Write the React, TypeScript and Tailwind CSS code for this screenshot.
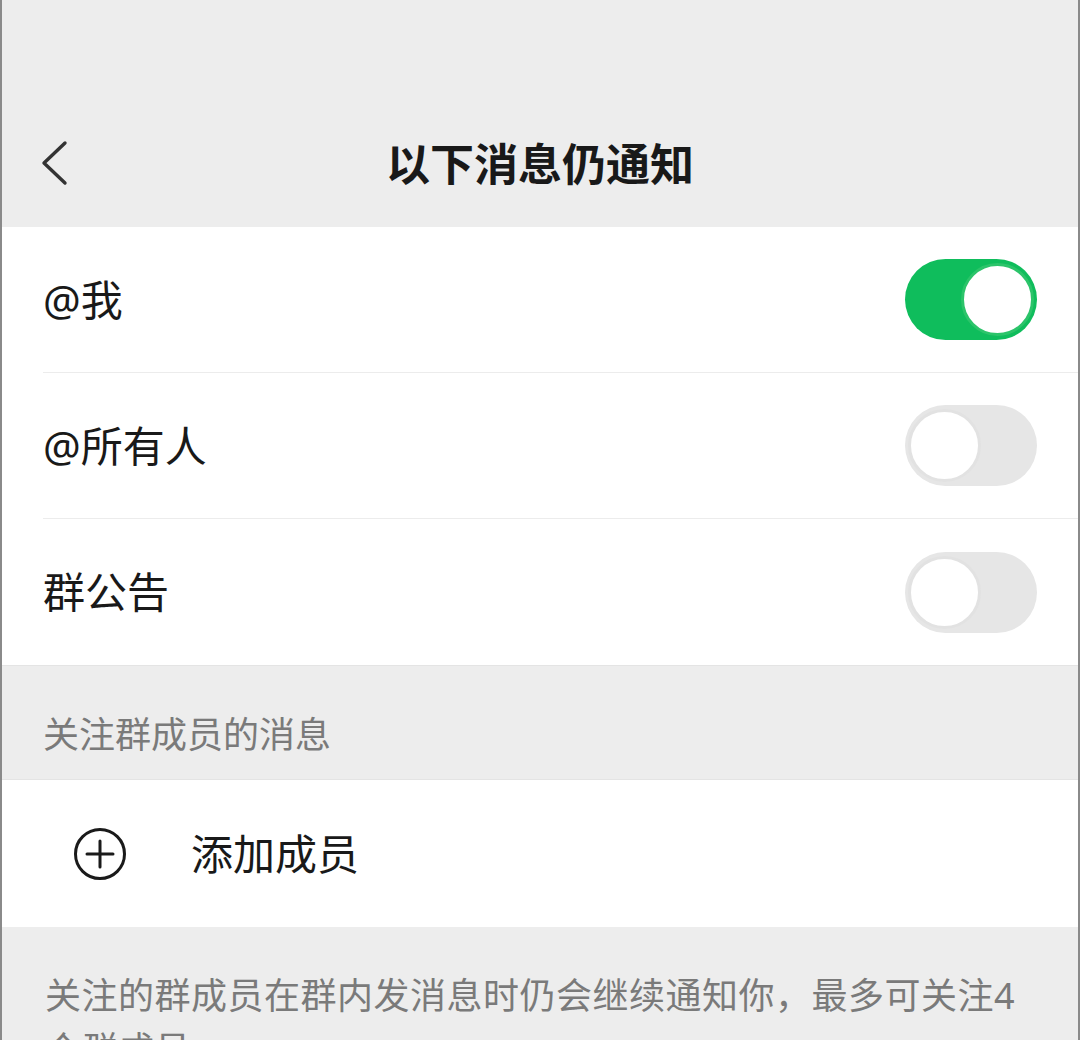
import { useState } from 'react';

const font = { fontFamily: '"Noto Sans", "Noto Sans CJK SC", sans-serif' };

function Toggle({ on, onChange }: { on: boolean; onChange: () => void }) {
  return (
    <button
      onClick={onChange}
      className={`relative flex h-[81px] w-[132px] items-center rounded-full px-[3px] ${
        on ? 'justify-end bg-[#0fbd5c]' : 'justify-start bg-[#e6e6e6]'
      }`}
    >
      <span
        className={`block h-[73px] w-[73px] rounded-full bg-white ${
          on ? 'border-[3px] border-[#2cc46a]' : 'border-[3px] border-[#e2e2e2]'
        }`}
      />
    </button>
  );
}

export default function App() {
  const [settings, setSettings] = useState([
    { label: '@我', on: true },
    { label: '@所有人', on: false },
    { label: '群公告', on: false },
  ]);

  const flip = (i: number) =>
    setSettings(s => s.map((x, j) => (j === i ? { ...x, on: !x.on } : x)));

  return (
    <div
      className="flex h-[1040px] w-[1080px] flex-col overflow-hidden border-x-2 border-[#8a8a8a] bg-[#ededed]"
      style={font}
    >
      {/* header */}
      <div className="flex h-[227px] shrink-0 flex-col justify-end">
        <div className="relative flex h-[127px] items-center justify-center">
          <svg className="absolute left-[36px] top-[40px]" width="34" height="48" viewBox="0 0 34 48">
            <path d="M27 3 L6 23 L27 43" fill="none" stroke="#333" strokeWidth="3.4" strokeLinecap="round" strokeLinejoin="round" />
          </svg>
          <h1 className="text-[44px] font-bold leading-none text-[#191919]">以下消息仍通知</h1>
        </div>
      </div>

      {/* toggles */}
      <div className="shrink-0 bg-white pl-[41px]">
        {settings.map((s, i) => (
          <div
            key={s.label}
            className={`flex h-[146px] items-center justify-between pr-[41px] ${
              i < settings.length - 1 ? 'border-b border-[#ececec]' : ''
            }`}
          >
            <span className="text-[42px] leading-none text-[#191919]">{s.label}</span>
            <Toggle on={s.on} onChange={() => flip(i)} />
          </div>
        ))}
      </div>

      <div className="flex h-[115px] shrink-0 items-center border-y border-[#e4e4e4] pl-[41px] pt-[24px]">
        <span className="text-[36px] leading-none text-[#7a7a7a]">关注群成员的消息</span>
      </div>

      <button className="flex h-[147px] shrink-0 items-center bg-white pl-[71px] text-left">
        <svg width="54" height="54" viewBox="0 0 54 54">
          <circle cx="27" cy="27" r="24.5" fill="none" stroke="#1a1a1a" strokeWidth="3" />
          <path d="M27 14 V40 M14 27 H40" stroke="#1a1a1a" strokeWidth="3" strokeLinecap="round" />
        </svg>
        <span className="ml-[64px] text-[42px] leading-none text-[#191919]">添加成员</span>
      </button>

      <div className="shrink-0 pl-[43px] pr-[56px] pt-[42px]">
        <p className="text-[36px] leading-[54px] tracking-[0.5px] text-[#7a7a7a]">
          关注的群成员在群内发消息时仍会继续通知你，最多可关注4个群成员
        </p>
      </div>
    </div>
  );
}
